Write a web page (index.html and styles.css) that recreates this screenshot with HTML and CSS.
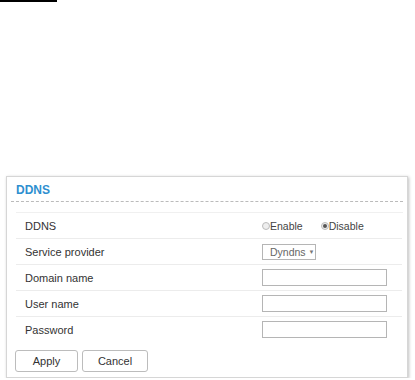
FILE: index.html
```html
<!DOCTYPE html>
<html lang="en">
<head>
  <meta charset="UTF-8" />
  <title>DDNS</title>
  <link rel="stylesheet" href="styles.css">
</head>
<body>
  <div class="top-bar"></div>

  <div class="panel">
    <h2 class="panel-title">DDNS</h2>
    <form class="ddns-form">
      <div class="form-row">
        <span class="row-label">DDNS</span>
        <div class="row-control radios">
          <label class="radio"><span class="dot"></span>Enable</label>
          <label class="radio"><span class="dot checked"></span>Disable</label>
        </div>
      </div>
      <div class="form-row">
        <span class="row-label">Service provider</span>
        <div class="row-control">
          <span class="select">Dyndns <span class="arrow">&#9660;</span></span>
        </div>
      </div>
      <div class="form-row">
        <span class="row-label">Domain name</span>
        <div class="row-control"><input type="text" class="text-input" /></div>
      </div>
      <div class="form-row">
        <span class="row-label">User name</span>
        <div class="row-control"><input type="text" class="text-input" /></div>
      </div>
      <div class="form-row last">
        <span class="row-label">Password</span>
        <div class="row-control"><input type="password" class="text-input" /></div>
      </div>

      <div class="buttons">
        <button type="button" class="btn apply">Apply</button>
        <button type="button" class="btn cancel">Cancel</button>
      </div>
    </form>
  </div>
</body>
</html>
```

FILE: styles.css
```css
body {
  margin: 0;
  font-family: "Liberation Sans", Arial, sans-serif;
  font-size: 11px;
  color: #333;
  background: #fff;
}

.top-bar {
  width: 57px;
  height: 2px;
  background: #000;
}

.panel {
  margin: 174px 0 0 6px;
  width: 402px;
  height: 202px;
  border: 1px solid #d6d6d6;
  box-shadow: 1px 1px 3px rgba(0,0,0,0.25);
  box-sizing: border-box;
  padding: 6px 4px 0 4px;
}

.panel-title {
  margin: 0;
  padding: 0 0 4px 5px;
  font-size: 12px;
  font-weight: bold;
  color: #2e8fd0;
  border-bottom: 1px dashed #bbb;
  line-height: 14px;
}

.ddns-form {
  margin: 10px 0 0 5px;
  padding-right: 1px;
  border-top: 1px solid #f0f0f0;
}

.form-row {
  display: grid;
  grid-template-columns: 246px 1fr;
  align-items: center;
  height: 25px;
  border-bottom: 1px solid #ececec;
}

.form-row.last {
  border-bottom: none;
}

.row-label {
  padding-left: 9px;
  color: #333;
}

.radios {
  display: flex;
  gap: 18px;
}

.radio {
  display: flex;
  align-items: center;
  color: #444;
  font-size: 10.5px;
}

.dot {
  width: 6px;
  height: 6px;
  border-radius: 50%;
  border: 1px solid #bbb;
  background: #eee;
  position: relative;
}

.dot.checked::after {
  content: "";
  position: absolute;
  left: 1px;
  top: 1px;
  width: 4px;
  height: 4px;
  border-radius: 50%;
  background: #555;
}

.select {
  display: flex;
  align-items: center;
  gap: 3px;
  white-space: nowrap;
  box-sizing: border-box;
  width: 54px;
  height: 16px;
  border: 1px solid #b5b5b5;
  padding-left: 7px;
  font-size: 10.5px;
  color: #666;
}

.arrow {
  font-size: 6px;
  color: #777;
}

.text-input {
  display: block;
  box-sizing: border-box;
  width: 125px;
  height: 17px;
  border: 1px solid #b5b5b5;
  padding: 0;
  margin: 0;
  outline: none;
}

.buttons {
  display: flex;
  gap: 4px;
  margin: 8px 0 0 -1px;
}

.btn {
  box-sizing: border-box;
  height: 22px;
  border: 1px solid #bcbcbc;
  border-radius: 3px;
  background: #fff;
  font-family: "Liberation Sans", Arial, sans-serif;
  font-size: 11px;
  color: #333;
  cursor: pointer;
}

.btn.apply {
  width: 63px;
}

.btn.cancel {
  width: 66px;
}
```
